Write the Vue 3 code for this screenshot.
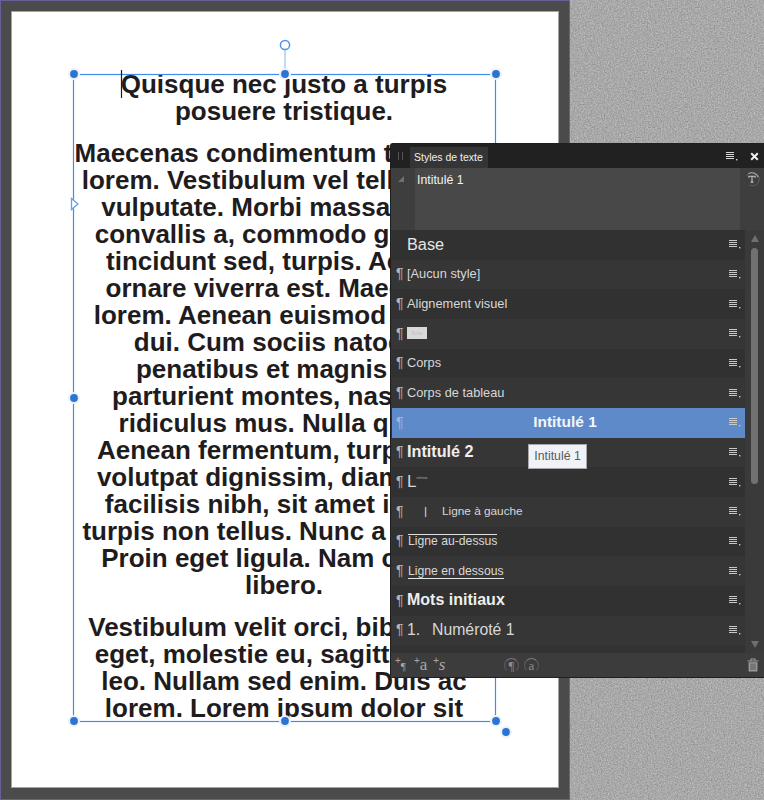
<script setup>
const paragraphs = [
  ['Quisque nec justo a turpis', 'posuere tristique.'],
  [
    'Maecenas condimentum tincidunt',
    'lorem. Vestibulum vel tellus. Sed',
    'vulputate. Morbi massa nunc,',
    'convallis a, commodo gravida,',
    'tincidunt sed, turpis. Aenean',
    'ornare viverra est. Maecenas',
    'lorem. Aenean euismod iaculis',
    'dui. Cum sociis natoque',
    'penatibus et magnis dis',
    'parturient montes, nascetur',
    'ridiculus mus. Nulla quam.',
    'Aenean fermentum, turpis sed',
    'volutpat dignissim, diam risus',
    'facilisis nibh, sit amet iaculis',
    'turpis non tellus. Nunc a mauris.',
    'Proin eget ligula. Nam cursus',
    'libero.'
  ],
  [
    'Vestibulum velit orci, bibendum',
    'eget, molestie eu, sagittis non,',
    'leo. Nullam sed enim. Duis ac',
    'lorem. Lorem ipsum dolor sit'
  ]
]

// poignées du cadre de texte
const handles = [
  [74, 74], [285, 74], [496, 74], [74, 398],
  [74, 721], [285, 721], [496, 721], [506, 732]
]

const styles = [
  { id: 'base', label: 'Base', kind: 'base', noMark: true },
  { id: 'aucun', label: '[Aucun style]' },
  { id: 'visuel', label: 'Alignement visuel' },
  { id: 'blank', kind: 'blank' },
  { id: 'corps', label: 'Corps' },
  { id: 'tableau', label: 'Corps de tableau' },
  { id: 'h1', label: 'Intitulé 1', kind: 'selected' },
  { id: 'h2', label: 'Intitulé 2', kind: 'bold' },
  { id: 'lettrine', kind: 'lettrine' },
  { id: 'gauche', label: 'Ligne à gauche', kind: 'left-rule' },
  { id: 'dessus', label: 'Ligne au-dessus', kind: 'over' },
  { id: 'dessous', label: 'Ligne en dessous', kind: 'under' },
  { id: 'mots', label: 'Mots initiaux', kind: 'words' },
  { id: 'num', label: 'Numéroté 1', kind: 'numbered' }
]
</script>

<template>
  <div class="screen">
    <svg class="noise" width="764" height="800" aria-hidden="true">
      <filter id="grain" x="0" y="0" width="100%" height="100%" color-interpolation-filters="sRGB">
        <feTurbulence type="fractalNoise" baseFrequency="0.7" numOctaves="2" seed="4" />
        <feColorMatrix type="matrix" values="0.28 0 0 0 0.52  0.28 0 0 0 0.52  0.28 0 0 0 0.52  0 0 0 0 1" />
      </filter>
      <rect width="764" height="800" filter="url(#grain)" />
    </svg>

    <div class="workspace">
      <div class="page">
        <div class="story">
          <p v-for="(lines, i) in paragraphs" :key="i">
            <span v-for="line in lines" :key="line" class="line">{{ line }}</span>
          </p>
        </div>
      </div>
    </div>

    <svg class="selection" width="764" height="800" aria-hidden="true">
      <rect x="73.5" y="74.5" width="422" height="647" fill="none" stroke="#3f8ceb" stroke-width="1.2" />
      <line x1="285" y1="50" x2="285" y2="70" stroke="#a9c9f2" stroke-width="1.4" />
      <circle cx="285" cy="45" r="4.6" fill="#fff" stroke="#4c94ea" stroke-width="1.5" />
      <path d="M71.5 198.5 L78 204 L71.5 209.5 Z" fill="#fff" stroke="#62a2ee" stroke-width="1.3" />
      <g v-for="h in handles" :key="h.join()">
        <circle :cx="h[0]" :cy="h[1]" r="6" fill="#eef1f5" />
        <circle :cx="h[0]" :cy="h[1]" r="3.9" fill="#2a74d6" />
      </g>
      <line x1="121.5" y1="70" x2="121.5" y2="98" stroke="#1d1b1c" stroke-width="1.2" />
    </svg>

    <section class="panel">
      <header class="panel-head">
        <span class="grip"></span>
        <span class="tab">Styles de texte</span>
        <svg class="menu-icon head-menu" width="13" height="9" viewBox="0 0 13 9">
          <path d="M0 .5h8M0 2.5h8M0 4.5h8M0 6.5h8" stroke="#d6d6d6" stroke-width="1" />
          <rect x="10" y="7" width="1.4" height="1.4" fill="#d6d6d6" />
        </svg>
        <svg class="close-icon" width="9" height="9" viewBox="0 0 9 9">
          <path d="M1.2 1.2L7.8 7.8M7.8 1.2L1.2 7.8" stroke="#eee" stroke-width="2" />
        </svg>
      </header>

      <div class="preview">
        <div class="preview-side">
          <span class="corner"></span>
        </div>
        <div class="preview-box">Intitulé 1</div>
        <div class="preview-tool">
          <svg width="16" height="16" viewBox="0 0 18 18">
            <path d="M3 5.2A7.6 7.6 0 1 1 6 15.9" fill="none" stroke="#666" stroke-width="1" />
            <path d="M5 3A7.6 7.6 0 0 1 16 7" fill="none" stroke="#a8a8a8" stroke-width="1.2" />
            <path d="M5.5 7.7V6h7v1.7M9 6v6.5M7.4 12.5h3.2" fill="none" stroke="#c8c8c8" stroke-width="1.2" />
          </svg>
        </div>
      </div>

      <div class="list-area">
        <ul class="rows">
          <li
            v-for="row in styles"
            :key="row.id"
            class="row"
            :class="row.kind"
          >
            <span class="mark">{{ row.noMark ? '' : '¶' }}</span>
            <span class="label">
              <template v-if="row.kind === 'blank'"><i class="blank-chip">Boîte</i></template>
              <template v-else-if="row.kind === 'lettrine'">L<small>ettrine</small></template>
              <template v-else-if="row.kind === 'left-rule'"><b class="rule">|</b>{{ row.label }}</template>
              <template v-else-if="row.kind === 'numbered'"><b class="num">1.</b>{{ row.label }}</template>
              <template v-else>{{ row.label }}</template>
            </span>
            <svg class="menu-icon" width="13" height="9" viewBox="0 0 13 9">
              <path d="M0 .5h8M0 2.5h8M0 4.5h8M0 6.5h8" stroke="#c8c8c8" stroke-width="1" />
              <rect x="10" y="7" width="1.4" height="1.4" fill="#c8c8c8" />
            </svg>
          </li>
        </ul>
        <div class="scrollbar">
          <span class="arrow up"></span>
          <span class="thumb"></span>
          <span class="arrow down"></span>
        </div>
      </div>

      <footer class="panel-foot">
        <span class="add"><sup>+</sup><em class="small-mark">¶</em></span>
        <span class="add"><sup>+</sup>a</span>
        <span class="add italic"><sup>+</sup>s</span>
        <span class="ring first">¶</span>
        <span class="ring">a</span>
        <svg class="trash" width="12" height="14" viewBox="0 0 12 14">
          <path d="M0.5 3h11M4 2.4V1h4v1.4" fill="none" stroke="#9a9a9a" stroke-width="1.1" />
          <path d="M1.6 4.2h8.8V13.5H1.6z" fill="#9a9a9a" />
          <path d="M4 5.5v6.5M6 5.5v6.5M8 5.5v6.5" stroke="#4a4a4a" stroke-width="0.9" />
        </svg>
      </footer>

      <div class="tooltip">Intitulé 1</div>
    </section>
  </div>
</template>

<style>
html, body {
  margin: 0;
  background: #a8a8a8;
}
</style>

<style scoped>
.screen {
  position: relative;
  width: 764px;
  height: 800px;
  overflow: hidden;
  font-family: "Liberation Sans", Arial, sans-serif;
}

.noise {
  position: absolute;
  left: 0;
  top: 0;
}

.selection {
  position: absolute;
  left: 0;
  top: 0;
  pointer-events: none;
}

.workspace {
  position: relative;
  box-sizing: border-box;
  width: 570px;
  height: 800px;
  padding: 10px 10px 11px 10px;
  background: #4b4b4b;
  border: 1px solid #65609a;
}

.page {
  position: relative;
  height: 100%;
  box-sizing: border-box;
  background: #fff;
  border: 1px solid #a3a3a3;
}

.story {
  position: absolute;
  left: 61px;
  top: 59px;
  width: 422px;
  text-align: center;
  font-size: 26px;
  font-weight: 700;
  line-height: 27px;
  color: #1f1c1d;
  white-space: nowrap;
}

.story p {
  margin: 0 0 15px;
}

.story p:last-child {
  margin-bottom: 0;
}

.line {
  display: block;
}

.panel {
  position: absolute;
  left: 390px;
  top: 143px;
  width: 374px;
  height: 535px;
  box-sizing: border-box;
  display: flex;
  flex-direction: column;
  background: #3a3a3a;
  border: 1px solid #1f1f1f;
  border-right: 0;
  border-radius: 3px 0 0 3px;
  color: #e2e2e2;
  font-size: 12.8px;
}

.panel-head {
  display: flex;
  align-items: center;
  height: 24px;
  flex: none;
  background: #212121;
}

.grip {
  width: 3px;
  height: 8px;
  margin-left: 7px;
  border-left: 1px solid #555;
  border-right: 1px solid #555;
}

.tab {
  margin-left: 7px;
  padding: 0 5px 0 4px;
  height: 21px;
  margin-top: 3px;
  line-height: 21px;
  background: #353535;
  font-size: 10.5px;
  color: #f0f0f0;
}

.head-menu {
  margin-left: auto;
  margin-right: 0;
}

.close-icon {
  margin-left: 8px;
  margin-right: 5px;
}

.preview {
  display: flex;
  height: 62px;
  flex: none;
  background: #3e3e3e;
}

.preview-side {
  width: 24px;
  flex: none;
}

.corner {
  display: block;
  width: 0;
  height: 0;
  margin: 8px 0 0 7px;
  border-style: solid;
  border-width: 0 0 6px 6px;
  border-color: transparent transparent #707070 transparent;
}

.preview-box {
  flex: 1;
  padding: 5px 2px;
  background: #484848;
  font-size: 12.3px;
  color: #f2f2f2;
}

.preview-tool {
  width: 24px;
  flex: none;
  padding: 3px 0 0 4px;
  box-sizing: border-box;
}

.list-area {
  display: flex;
  flex: 1;
  min-height: 0;
  background: #343434;
}

.rows {
  flex: 1;
  list-style: none;
  margin: 0;
  padding: 0 0 0 1px;
  background: #333;
}

.row {
  display: flex;
  align-items: center;
  height: 29.67px;
  background: #313131;
  color: #d8d8d8;
}

.row:nth-child(even) {
  background: #363636;
}

.mark {
  width: 11px;
  margin: -2px 0 0 3px;
  padding-left: 1px;
  flex: none;
  font-size: 14px;
  color: #b5b5b5;
}

.label {
  flex: 1;
  white-space: nowrap;
  margin-top: -1px;
}

.menu-icon {
  flex: none;
  margin-right: 3px;
}

.row.base .label {
  font-size: 16.3px;
  color: #e6e6e6;
}

.row.selected,
.row.selected:nth-child(even) {
  background: #5f8ac9;
  color: #f2f5fa;
}

.row.selected .label {
  padding-right: 6px;
  text-align: center;
  font-size: 15.5px;
  font-weight: 700;
}

.row.selected .mark {
  color: #9db7dd;
}

.row.bold .label {
  font-size: 16.2px;
  font-weight: 700;
  color: #eee;
}

.row.words .label {
  font-size: 16px;
  font-weight: 700;
  color: #eee;
}

.row.numbered .label {
  font-size: 15.8px;
}

.num {
  display: inline-block;
  width: 25px;
  font-weight: 400;
}

.blank-chip {
  display: block;
  width: 20px;
  height: 12px;
  background: #d9d9d9;
  font-style: normal;
  font-size: 5px;
  line-height: 12px;
  text-align: center;
  color: #c2c2c2;
}

.row.lettrine .label {
  font-size: 17px;
}

.row.lettrine small {
  position: relative;
  top: -8px;
  font-size: 4px;
  color: #aaa;
}

.row.left-rule .label {
  font-size: 11.8px;
}

.rule {
  display: inline-block;
  width: 18px;
  margin-left: 17px;
  font-weight: 400;
}

.row.over .label {
  flex: none;
  margin: -1px auto 0 1px;
  border-top: 1px solid #e0e0e0;
  line-height: 13px;
  font-size: 12.2px;
}

.row.under .label {
  flex: none;
  margin: 0 auto 0 1px;
  border-bottom: 1px solid #e8e8e8;
  line-height: 14px;
  font-size: 12.2px;
}

.scrollbar {
  position: relative;
  width: 19px;
  flex: none;
  background: #3a3a3a;
}

.arrow {
  position: absolute;
  left: 6px;
  width: 0;
  height: 0;
  border-left: 4px solid transparent;
  border-right: 4px solid transparent;
}

.arrow.up {
  top: 5px;
  border-bottom: 7px solid #6f6f6f;
}

.arrow.down {
  bottom: 5px;
  border-top: 7px solid #6f6f6f;
}

.thumb {
  position: absolute;
  left: 6px;
  top: 18px;
  width: 7px;
  height: 236px;
  border-radius: 4px;
  background: #717171;
}

.panel-foot {
  position: relative;
  display: flex;
  align-items: center;
  flex: none;
  height: 24px;
  background: #3c3c3c;
  color: #a8a8a8;
  font-family: "Liberation Serif", serif;
  font-size: 17px;
}

.add {
  width: 19px;
  white-space: nowrap;
}

.add:first-child {
  margin-left: 4px;
}

.add sup {
  font-family: "Liberation Sans", sans-serif;
  font-size: 10px;
  vertical-align: 6px;
  line-height: 0;
}

.small-mark {
  font-style: normal;
  font-size: 11px;
}

.add.italic {
  font-style: italic;
}

.ring {
  width: 13px;
  height: 13px;
  margin-left: 5px;
  border: 1px solid transparent;
  border-top-color: #7c7c7c;
  border-right-color: #5c5c5c;
  border-left-color: #5c5c5c;
  border-radius: 50%;
  text-align: center;
  font-size: 13px;
  line-height: 13px;
  color: #8c8c8c;
}

.ring.first {
  margin-left: 52px;
}

.trash {
  margin-left: auto;
  margin-right: 5px;
}

.tooltip {
  position: absolute;
  left: 137px;
  top: 300px;
  width: 59px;
  height: 25px;
  box-sizing: border-box;
  background: #f1f2f8;
  border: 1px solid #a9a9a9;
  text-align: center;
  font-size: 12.3px;
  line-height: 23px;
  color: #5a5a5a;
}
</style>
